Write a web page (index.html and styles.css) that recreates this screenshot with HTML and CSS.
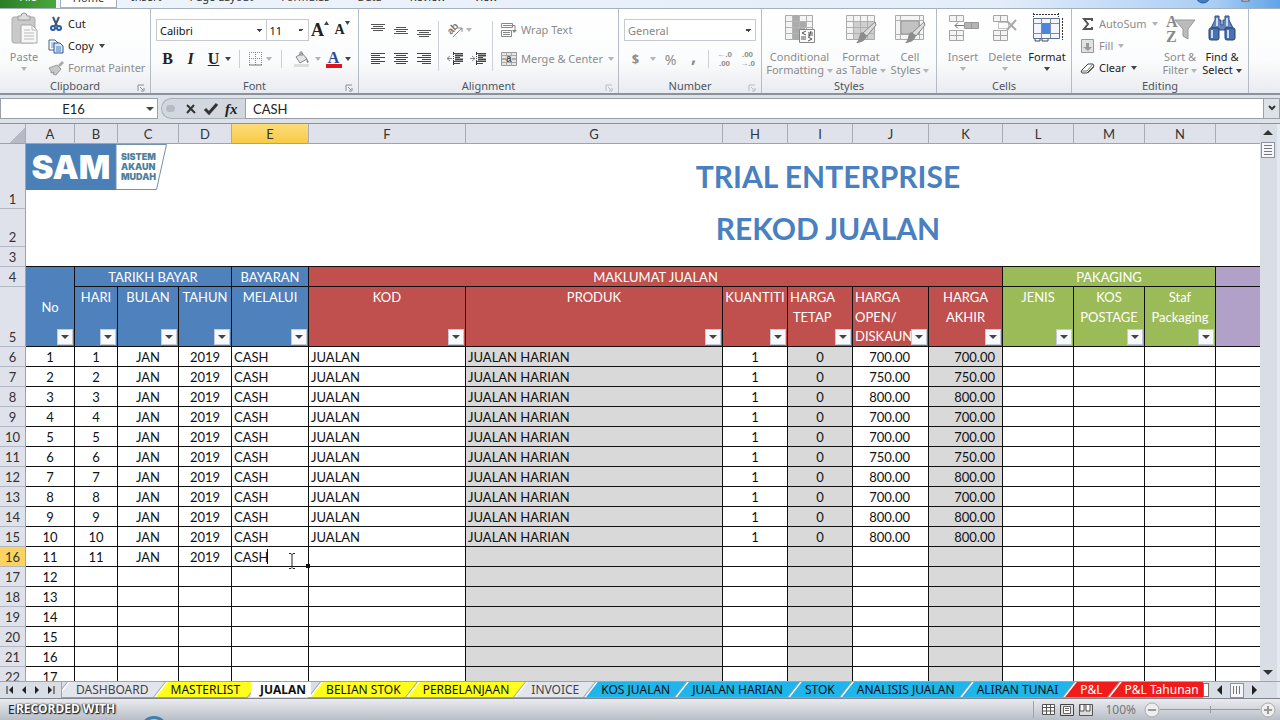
FILE: index.html
```html
<!DOCTYPE html>
<html lang="ms">
<head>
<meta charset="utf-8">
<title>Rekod Jualan</title>
<link rel="stylesheet" href="styles.css">
</head>
<body>
<nav class="ribbon-tabs">
  <button class="rtab file">File</button>
  <button class="rtab home">Home</button>
  <button class="rtab">Insert</button>
  <button class="rtab">Page Layout</button>
  <button class="rtab">Formulas</button>
  <button class="rtab">Data</button>
  <button class="rtab">Review</button>
  <button class="rtab">View</button>
  <span class="window-icons">
    <svg width="70" height="9" viewBox="0 0 70 9"><circle cx="9" cy="-3" r="7" fill="#3d7fc4" stroke="#2c5f9a"/><path d="M7 0h4" stroke="#fff" stroke-width="2"/><rect x="48" y="-6" width="7" height="8" fill="#fff" stroke="#555"/></svg>
  </span>
</nav>

<header class="ribbon">
  <section class="group g-clip">
    <div class="group-body clip-body">
      <button class="big paste off">
        <svg width="30" height="32" viewBox="0 0 30 32"><rect x="3" y="4" width="23" height="26" rx="2" fill="#c9c9c9" stroke="#adadad"/><path d="M9 7V3h3a3 3 0 0 1 6 0h3v4z" fill="#ddd" stroke="#999"/><path d="M12 12h11l5 5v13H12z" fill="#f7f7f7" stroke="#aaa"/><path d="M23 12v5h5M15 17h6M15 20h10M15 23h10M15 26h10" fill="none" stroke="#bbb"/></svg>
        <span>Paste</span><i class="arr"></i>
      </button>
      <div class="stack">
        <button class="line"><svg width="16" height="16" viewBox="0 0 16 16"><path d="M5 1l4 9M11 1L7 10" stroke="#44556e" stroke-width="2"/><circle cx="5" cy="12" r="2" fill="none" stroke="#2a5caa" stroke-width="2"/><circle cx="11" cy="12" r="2" fill="none" stroke="#2a5caa" stroke-width="2"/></svg>Cut</button>
        <button class="line"><svg width="16" height="16" viewBox="0 0 16 16"><path d="M1 2h6l3 3v7H1z" fill="#fff" stroke="#3c639c"/><path d="M3 5h4M3 7h3M3 9h3" stroke="#6d94cc"/><path d="M6 5h6l3 3v7H6z" fill="#dce8f8" stroke="#2e5796"/><path d="M8 9h5M8 11h5M8 13h5" stroke="#4e7dc0"/></svg>Copy<i class="arr"></i></button>
        <button class="line off"><svg width="16" height="16" viewBox="0 0 16 16"><path d="M10 5l4-4 2 2-4 4z" fill="#aaa"/><path d="M1 8l8-3 4 4-5 6-3-1 1-2-3 1 0-2z" fill="#c8c8c8" stroke="#999"/></svg>Format Painter</button>
      </div>
    </div>
    <h2>Clipboard</h2><svg class="launch" width="8" height="8" viewBox="0 0 8 8"><path d="M1 7V1h6M3 3l3 3M7 4v3H4" fill="none" stroke="#8a8f98"/></svg>
  </section>

  <section class="group g-font">
    <div class="group-body font-body">
      <div class="row">
        <select class="combo face" aria-label="Font"><option>Calibri</option></select>
        <select class="combo size" aria-label="Font size"><option>11</option></select>
        <button class="ic w24 serif grow" aria-label="Grow font">A<svg width="5" height="4" viewBox="0 0 5 4"><path d="M0 4L2.500 0L5 4z" fill="#345"/></svg></button>
        <button class="ic w24 serif shrink" aria-label="Shrink font">A<svg width="5" height="4" viewBox="0 0 5 4"><path d="M0 0h5L2.500 4z" fill="#345"/></svg></button>
      </div>
      <div class="row font-row">
        <button class="ic w23 serif">B</button>
        <button class="ic w23 serif"><em>I</em></button>
        <button class="ic w23 serif"><u>U</u></button>
        <i class="arr"></i><span class="vsep"></span>
        <button class="ic w16" aria-label="Borders"><svg width="14" height="14" viewBox="0 0 14 14"><path d="M.5 0v13M6.500 0v13M12.500 0v13M0 .5h13M0 6.500h13" stroke="#888" stroke-dasharray="1 1"/><path d="M0 13h13" stroke="#777"/></svg></button>
        <i class="arr dim"></i><span class="vsep"></span>
        <button class="ic w23" aria-label="Fill color"><svg width="17" height="16" viewBox="0 0 17 16"><path d="M3 6l6-4 5 6-7 4z" fill="#e4e4e4" stroke="#888"/><path d="M7 5V1h2v4" fill="none" stroke="#888"/><path d="M13 6l3 5-2 1z" fill="#888"/><path d="M1 13h15v3H1z" fill="#ddd"/></svg></button>
        <i class="arr dim"></i>
        <button class="ic w23 fontcolor serif">A</button>
        <i class="arr"></i>
      </div>
    </div>
    <h2>Font</h2><svg class="launch" width="8" height="8" viewBox="0 0 8 8"><path d="M1 7V1h6M3 3l3 3M7 4v3H4" fill="none" stroke="#8a8f98"/></svg>
  </section>

  <section class="group g-align">
    <div class="group-body align-body">
      <div class="grid3">
        <button class="ic" aria-label="Top align"><svg width="14" height="14" viewBox="0 0 14 14"><path d="M0 1.500h14M2 3.500h10M0 5.500h14M2 7.500h10" stroke="#555"/></svg></button>
        <button class="ic" aria-label="Middle align"><svg width="14" height="14" viewBox="0 0 14 14"><path d="M2 4.500h10M0 6.500h14M2 8.500h10M0 10.500h14" stroke="#555"/></svg></button>
        <button class="ic" aria-label="Bottom align"><svg width="14" height="14" viewBox="0 0 14 14"><path d="M0 7.500h14M2 9.500h10M0 11.500h14M2 13.500h10" stroke="#555"/></svg></button>
        <button class="ic" aria-label="Align left"><svg width="14" height="14" viewBox="0 0 14 14"><path d="M0 1.500h14M0 3.500h9M0 5.500h14M0 7.500h9M0 9.500h14M0 11.500h9" stroke="#444"/></svg></button>
        <button class="ic" aria-label="Center"><svg width="14" height="14" viewBox="0 0 14 14"><path d="M0 1.500h14M2 3.500h10M0 5.500h14M2 7.500h10M0 9.500h14M2 11.500h10" stroke="#444"/></svg></button>
        <button class="ic" aria-label="Align right"><svg width="14" height="14" viewBox="0 0 14 14"><path d="M0 1.500h14M5 3.500h9M0 5.500h14M5 7.500h9M0 9.500h14M5 11.500h9" stroke="#444"/></svg></button>
      </div>
      <span class="vsep tall"></span>
      <div class="stack2">
        <div class="row"><button class="ic w23" aria-label="Orientation"><svg width="16" height="16" viewBox="0 0 16 16"><text x="1" y="10" class="abtext" transform="rotate(-45 6 8)">ab</text><path d="M6 15L15 6M11 6h4v4" fill="none" stroke="#888"/></svg></button><i class="arr dim"></i></div>
        <div class="row"><button class="ic w23" aria-label="Decrease indent"><svg width="16" height="14" viewBox="0 0 16 14"><path d="M6 1.500h10M8 5.500h5M6 9.500h10M6 11.500h7" stroke="#444"/><path d="M8 3.500h8M8 7.500h8" stroke="#444" stroke-width="2"/><path d="M6.500 0v14" stroke="#333" stroke-dasharray="1 1"/><path d="M0 6.500h5M3 4L0 6.500L3 9" fill="none" stroke="#888"/></svg></button><button class="ic w23" aria-label="Increase indent"><svg width="16" height="14" viewBox="0 0 16 14"><path d="M6 1.500h10M8 5.500h5M6 9.500h10M6 11.500h7" stroke="#444"/><path d="M8 3.500h8M8 7.500h8" stroke="#444" stroke-width="2"/><path d="M6.500 0v14" stroke="#333" stroke-dasharray="1 1"/><path d="M0 6.500h5M2 4L5 6.500L2 9" fill="none" stroke="#888"/></svg></button></div>
      </div>
      <span class="vsep tall"></span>
      <div class="stack2">
        <button class="line off"><svg width="16" height="16" viewBox="0 0 16 16"><path d="M.5 1.500h11v4H.5zM.5 8.500h10v6H.5zM2 3.500h12v6M2 10.500h7M2 12.500h7" fill="none" stroke="#888"/><path d="M11 8h5l-3 3z" fill="#888"/></svg>Wrap Text</button>
        <button class="line off"><svg width="16" height="16" viewBox="0 0 16 16"><path d="M.5 1.500h15v13H.5z" fill="#e6e6e6" stroke="#999"/><path d="M0 4.500h15M0 11.500h15M5.500 1v3M10.500 1v3M5.500 12v3M10.500 12v3" stroke="#aaa"/><path d="M1 8h4M11 8h4" stroke="#777"/><text x="5" y="11" class="atext">a</text></svg>Merge &amp; Center<i class="arr"></i></button>
      </div>
    </div>
    <h2>Alignment</h2><svg class="launch" width="8" height="8" viewBox="0 0 8 8"><path d="M1 7V1h6M3 3l3 3M7 4v3H4" fill="none" stroke="#b9bdc4"/></svg>
  </section>

  <section class="group g-number">
    <div class="group-body font-body">
      <div class="row"><select class="combo general" aria-label="Number format"><option>General</option></select></div>
      <div class="row num-row">
        <button class="ic w23 off money">$</button><i class="arr dim"></i>
        <button class="ic w23 off pct">%</button>
        <button class="ic w23 off comma">,</button><span class="vsep"></span>
        <button class="ic w23 off dec">←.0<br>.00</button>
        <button class="ic w23 off dec">.00<br>→.0</button>
      </div>
    </div>
    <h2>Number</h2><svg class="launch" width="8" height="8" viewBox="0 0 8 8"><path d="M1 7V1h6M3 3l3 3M7 4v3H4" fill="none" stroke="#b9bdc4"/></svg>
  </section>

  <section class="group g-styles">
    <div class="group-body">
      <button class="big b65 off"><svg width="32" height="32" viewBox="0 0 32 32"><path d="M1.500 2.500h27v24h-27z" fill="#f4f4f4" stroke="#aaa"/><path d="M9 3h7v23H9zM16 9h7v6h-7zM16 15h5v6h-5z" fill="#ababab"/><path d="M1 8.500h27M1 14.500h27M1 20.500h27M8.500 2v25M15.500 2v25M22.500 2v25" stroke="#b4b4b4"/><path d="M15.500 16.500h15v13h-15z" fill="#fafafa" stroke="#888"/><path d="M22 18l-4 2 4 2M17 24h5M17 26h5M24 20h5M24 22h5M27 18l-2 6M24 24l4 2-4 2" fill="none" stroke="#555"/></svg><span>Conditional<br>Formatting <i class="arr"></i></span></button>
      <button class="big b57 off"><svg width="32" height="32" viewBox="0 0 32 32"><path d="M1.500 2.500h28v24h-28z" fill="#f4f4f4" stroke="#aaa"/><path d="M9 9h20v17H9z" fill="#cfcfcf"/><path d="M1 8.500h28M1 14.500h28M1 20.500h28M8.500 2v25M15.500 2v25M22.500 2v25" stroke="#b0b0b0"/><path d="M30 9l1 3-9 11-4-3z" fill="#ddd" stroke="#888"/><path d="M17 19l5 4c-2 5-6 7-11 7 4-3 2-8 6-11z" fill="#8c8c8c"/></svg><span>Format<br>as Table <i class="arr"></i></span></button>
      <button class="big b40 off"><svg width="32" height="32" viewBox="0 0 32 32"><path d="M1.500 2.500h28v24h-28z" fill="#f4f4f4" stroke="#aaa"/><path d="M1 7.500h28M1 21.500h28M6.500 2v25M25.500 2v25" stroke="#b0b0b0"/><path d="M7 8h18v13H7z" fill="#c2c2c2" stroke="#999"/><path d="M30 9l1 3-9 11-4-3z" fill="#ddd" stroke="#888"/><path d="M17 19l5 4c-2 5-6 7-11 7 4-3 2-8 6-11z" fill="#8c8c8c"/></svg><span>Cell<br>Styles <i class="arr"></i></span></button>
    </div>
    <h2>Styles</h2>
  </section>

  <section class="group g-cells">
    <div class="group-body">
      <button class="big b42 off"><svg width="32" height="32" viewBox="0 0 32 32"><path d="M2.500 2.500h14v6h-14zM9.500 2v6M2.500 17.500h14v10h-14zM9.500 17v10M2 22.500h14" fill="#f4f4f4" stroke="#a5a5a5"/><path d="M17.500 9.500h14v6h-14z" fill="#b4b4b4" stroke="#999"/><path d="M24.500 9v6" stroke="#999"/><path d="M8 12.500h9M11 9.500l-3 3 3 3" fill="none" stroke="#777"/></svg><span>Insert</span><i class="arr"></i></button>
      <button class="big b42 off"><svg width="32" height="32" viewBox="0 0 32 32"><path d="M4.500 2.500h14v6h-14zM11.500 2v6M4.500 17.500h14v10h-14zM11.500 17v10M4 22.500h14" fill="#f4f4f4" stroke="#a5a5a5"/><path d="M9.500 9.500h10v6h-10z" fill="none" stroke="#888" stroke-dasharray="1 1"/><path d="M18 8l9 9M27 7l-9 10" stroke="#aaa" stroke-width="2"/></svg><span>Delete</span><i class="arr"></i></button>
      <button class="big b42"><svg width="32" height="32" viewBox="0 0 32 32"><path d="M2 1.500h26" stroke="#333" stroke-dasharray="2 1"/><path d="M2.500 0v4M27.500 0v4M31.500 5v22" stroke="#333" stroke-dasharray="2 1"/><path d="M2.500 5.500h26v20h-26z" fill="#f2f5fb" stroke="#5d6f90"/><path d="M2 10.500h26M2 20.500h26M10.500 5v20M19.500 5v20" stroke="#7b8cab"/><path d="M11 10h8v11h-8z" fill="#4e86de"/><path d="M4 26v2h5v-2M11 26v2h6v-2" fill="#fff" stroke="#445"/></svg><span>Format</span><i class="arr"></i></button>
    </div>
    <h2>Cells</h2>
  </section>

  <section class="group g-edit">
    <div class="group-body edit-body">
      <div class="stack">
        <button class="line off"><svg width="16" height="16" viewBox="0 0 16 16"><path d="M13 5V3H5l4 5-4 5h8v-2" fill="none" stroke="#555" stroke-width="2"/></svg>AutoSum<i class="arr"></i></button>
        <button class="line off"><svg width="16" height="16" viewBox="0 0 16 16"><path d="M2.500 1.500h12v13h-12z" fill="#e2e2e2" stroke="#999"/><path d="M7 5h3v4h3l-4 4-5-4h3z" fill="#999"/></svg>Fill<i class="arr"></i></button>
        <button class="line"><svg width="16" height="16" viewBox="0 0 16 16"><path d="M2 11l7-7h5l1 2-7 7H3z" fill="#fff" stroke="#444"/><path d="M9 13l6-6M2 11l6 0 6-7" fill="none" stroke="#777"/></svg>Clear<i class="arr"></i></button>
      </div>
      <button class="big b42 off"><svg width="32" height="32" viewBox="0 0 32 32"><path d="M11 7h20l-7 9v10l-5-3v-7z" fill="#bbb" stroke="#999"/><text x="2" y="14" class="aztext">A</text><text x="2" y="29" class="aztext">Z</text></svg><span>Sort &amp;<br>Filter <i class="arr"></i></span></button>
      <button class="big b42"><svg width="32" height="32" viewBox="0 0 32 32"><path d="M9 3h4v4h2v5h2V7h2V3h4v4l4 8h-8v2h-6v-2H5l4-8z" fill="#6486bd" stroke="#2f4d82"/><rect x="3" y="15" width="10" height="12" rx="2" fill="#4a70b0" stroke="#26426f"/><rect x="19" y="15" width="10" height="12" rx="2" fill="#4a70b0" stroke="#26426f"/><path d="M6 17v8M22 17v8M11 5v8M21 5v8" stroke="#c9daf3" stroke-width="2"/></svg><span>Find &amp;<br>Select <i class="arr"></i></span></button>
    </div>
    <h2>Editing</h2>
  </section>
</header>

<div class="formula-bar">
  <div class="name-box"><input aria-label="Name box" value="E16"><i class="arr"></i></div>
  <div class="fx">
    <i class="dot"></i>
    <button aria-label="Cancel"><svg width="12" height="12" viewBox="0 0 12 12"><path d="M2 2l8 8M9 2l-7 8" stroke="#333" stroke-width="2"/></svg></button>
    <button aria-label="Enter"><svg width="14" height="12" viewBox="0 0 14 12"><path d="M1 6l4 4 8-9" fill="none" stroke="#333" stroke-width="3"/></svg></button>
    <button class="fxb"><em>fx</em></button>
  </div>
  <input class="formula" aria-label="Formula" value="CASH">
  <button class="expand" aria-label="Expand formula bar"><svg width="8" height="7" viewBox="0 0 8 7"><path d="M1 1l3 3 3-3" fill="none" stroke="#333" stroke-width="2"/></svg></button>
</div>

<main class="workspace">
  <div class="sheet">
    <table>
      <colgroup><col class="c0"><col class="cA"><col class="cB"><col class="cC"><col class="cD"><col class="cE"><col class="cF"><col class="cG"><col class="cH"><col class="cH"><col class="cJ"><col class="cK"><col class="cL"><col class="cL"><col class="cL"><col class="cO"></colgroup>
      <thead>
        <tr class="letters"><th class="corner"></th><th>A</th><th>B</th><th>C</th><th>D</th><th class="cur">E</th><th>F</th><th>G</th><th>H</th><th>I</th><th>J</th><th>K</th><th>L</th><th>M</th><th>N</th><th></th></tr>
      </thead>
      <tbody>
        <tr class="r1"><th>1</th><td class="title" colspan="15">
          <div class="logo"><strong>SAM</strong><svg width="51" height="46" viewBox="0 0 51 46"><path d="M0 .5h50.500L40.500 45.500H0z" fill="#fff" stroke="#6f93a8"/></svg><span>SISTEM<br>AKAUN<br>MUDAH</span></div>
          TRIAL ENTERPRISE</td></tr>
        <tr class="r2"><th>2</th><td class="title" colspan="15">REKOD JUALAN</td></tr>
        <tr class="r3"><th>3</th><td class="rule" colspan="15"></td></tr>
        <tr class="h4"><th>4</th><td class="blue no" rowspan="2">No<button class="flt" aria-label="Filter"></button></td><td class="blue" colspan="3">TARIKH BAYAR</td><td class="blue">BAYARAN</td><td class="red" colspan="6">MAKLUMAT JUALAN</td><td class="green" colspan="3">PAKAGING</td><td class="purple"></td></tr>
        <tr class="h5"><th>5</th><td class="blue">HARI<button class="flt" aria-label="Filter"></button></td><td class="blue">BULAN<button class="flt" aria-label="Filter"></button></td><td class="blue">TAHUN<button class="flt" aria-label="Filter"></button></td><td class="blue">MELALUI<button class="flt" aria-label="Filter"></button></td><td class="red">KOD<button class="flt" aria-label="Filter"></button></td><td class="red">PRODUK<button class="flt" aria-label="Filter"></button></td><td class="red">KUANTITI<button class="flt" aria-label="Filter"></button></td><td class="red lft">HARGA<br>&nbsp;TETAP<button class="flt" aria-label="Filter"></button></td><td class="red lft">HARGA<br>OPEN/<div class="last">DISKAUN</div><button class="flt" aria-label="Filter"></button></td><td class="red">HARGA<br>AKHIR<button class="flt" aria-label="Filter"></button></td><td class="green">JENIS<button class="flt" aria-label="Filter"></button></td><td class="green">KOS<br>POSTAGE<button class="flt" aria-label="Filter"></button></td><td class="green">Staf<br>Packaging<button class="flt" aria-label="Filter"></button></td><td class="purple"></td></tr>
        <tr><th>6</th><td>1</td><td>1</td><td>JAN</td><td>2019</td><td>CASH</td><td>JUALAN</td><td>JUALAN HARIAN</td><td>1</td><td>0</td><td>700.00</td><td>700.00</td><td></td><td></td><td></td><td></td></tr>
        <tr><th>7</th><td>2</td><td>2</td><td>JAN</td><td>2019</td><td>CASH</td><td>JUALAN</td><td>JUALAN HARIAN</td><td>1</td><td>0</td><td>750.00</td><td>750.00</td><td></td><td></td><td></td><td></td></tr>
        <tr><th>8</th><td>3</td><td>3</td><td>JAN</td><td>2019</td><td>CASH</td><td>JUALAN</td><td>JUALAN HARIAN</td><td>1</td><td>0</td><td>800.00</td><td>800.00</td><td></td><td></td><td></td><td></td></tr>
        <tr><th>9</th><td>4</td><td>4</td><td>JAN</td><td>2019</td><td>CASH</td><td>JUALAN</td><td>JUALAN HARIAN</td><td>1</td><td>0</td><td>700.00</td><td>700.00</td><td></td><td></td><td></td><td></td></tr>
        <tr><th>10</th><td>5</td><td>5</td><td>JAN</td><td>2019</td><td>CASH</td><td>JUALAN</td><td>JUALAN HARIAN</td><td>1</td><td>0</td><td>700.00</td><td>700.00</td><td></td><td></td><td></td><td></td></tr>
        <tr><th>11</th><td>6</td><td>6</td><td>JAN</td><td>2019</td><td>CASH</td><td>JUALAN</td><td>JUALAN HARIAN</td><td>1</td><td>0</td><td>750.00</td><td>750.00</td><td></td><td></td><td></td><td></td></tr>
        <tr><th>12</th><td>7</td><td>7</td><td>JAN</td><td>2019</td><td>CASH</td><td>JUALAN</td><td>JUALAN HARIAN</td><td>1</td><td>0</td><td>800.00</td><td>800.00</td><td></td><td></td><td></td><td></td></tr>
        <tr><th>13</th><td>8</td><td>8</td><td>JAN</td><td>2019</td><td>CASH</td><td>JUALAN</td><td>JUALAN HARIAN</td><td>1</td><td>0</td><td>700.00</td><td>700.00</td><td></td><td></td><td></td><td></td></tr>
        <tr><th>14</th><td>9</td><td>9</td><td>JAN</td><td>2019</td><td>CASH</td><td>JUALAN</td><td>JUALAN HARIAN</td><td>1</td><td>0</td><td>800.00</td><td>800.00</td><td></td><td></td><td></td><td></td></tr>
        <tr><th>15</th><td>10</td><td>10</td><td>JAN</td><td>2019</td><td>CASH</td><td>JUALAN</td><td>JUALAN HARIAN</td><td>1</td><td>0</td><td>800.00</td><td>800.00</td><td></td><td></td><td></td><td></td></tr>
        <tr><th class="cur">16</th><td>11</td><td>11</td><td>JAN</td><td>2019</td><td class="editing"><input aria-label="E16" value="CASH"><i class="caret"></i><svg class="ibeam" width="8" height="16" viewBox="0 0 8 16"><path d="M1 .5h2l1 1 1-1h2M4 1v13M1 15.500h2l1-1 1 1h2" fill="none" stroke="#222"/></svg><i class="handle"></i></td><td></td><td></td><td></td><td></td><td></td><td></td><td></td><td></td><td></td><td></td></tr>
        <tr><th>17</th><td>12</td><td></td><td></td><td></td><td></td><td></td><td></td><td></td><td></td><td></td><td></td><td></td><td></td><td></td><td></td></tr>
        <tr><th>18</th><td>13</td><td></td><td></td><td></td><td></td><td></td><td></td><td></td><td></td><td></td><td></td><td></td><td></td><td></td><td></td></tr>
        <tr><th>19</th><td>14</td><td></td><td></td><td></td><td></td><td></td><td></td><td></td><td></td><td></td><td></td><td></td><td></td><td></td><td></td></tr>
        <tr><th>20</th><td>15</td><td></td><td></td><td></td><td></td><td></td><td></td><td></td><td></td><td></td><td></td><td></td><td></td><td></td><td></td></tr>
        <tr><th>21</th><td>16</td><td></td><td></td><td></td><td></td><td></td><td></td><td></td><td></td><td></td><td></td><td></td><td></td><td></td><td></td></tr>
        <tr><th>22</th><td>17</td><td></td><td></td><td></td><td></td><td></td><td></td><td></td><td></td><td></td><td></td><td></td><td></td><td></td><td></td></tr>
      </tbody>
    </table>
  </div>
  <div class="vscroll"><i class="up"></i><i class="thumb"></i><i class="down"></i></div>
</main>

<div class="tabbar">
  <div class="tabnav">
    <button aria-label="First sheet"><svg width="8" height="8" viewBox="0 0 8 8"><path d="M1 0v8" stroke="#222"/><path d="M7 0v8L3 4z" fill="#222"/></svg></button>
    <button aria-label="Previous sheet"><svg width="8" height="8" viewBox="0 0 8 8"><path d="M6 0v8L2 4z" fill="#222"/></svg></button>
    <button aria-label="Next sheet"><svg width="8" height="8" viewBox="0 0 8 8"><path d="M2 0v8l4-4z" fill="#222"/></svg></button>
    <button aria-label="Last sheet"><svg width="8" height="8" viewBox="0 0 8 8"><path d="M1 0v8l4-4z" fill="#222"/><path d="M7 0v8" stroke="#222"/></svg></button>
  </div>
  <div class="tabs">
    <button class="tab plain first"><span>DASHBOARD</span></button>
    <button class="tab yellow"><span>MASTERLIST</span></button>
    <button class="tab active"><span>JUALAN</span></button>
    <button class="tab yellow"><span>BELIAN STOK</span></button>
    <button class="tab yellow"><span>PERBELANJAAN</span></button>
    <button class="tab plain"><span>INVOICE</span></button>
    <button class="tab cyan"><span>KOS JUALAN</span></button>
    <button class="tab cyan"><span>JUALAN HARIAN</span></button>
    <button class="tab cyan"><span>STOK</span></button>
    <button class="tab cyan"><span>ANALISIS JUALAN</span></button>
    <button class="tab cyan"><span>ALIRAN TUNAI</span></button>
    <button class="tab crimson"><span>P&amp;L</span></button>
    <button class="tab crimson"><span>P&amp;L Tahunan</span></button>
  </div>
  <div class="hscroll"><i class="grip"></i><i class="left"></i><i class="hthumb"></i><i class="right"></i></div>
</div>

<footer class="status">
  <span class="mode">Enter</span>
  <div class="views">
    <button aria-label="Normal"><svg width="13" height="11" viewBox="0 0 13 11"><path d="M.5 .5h12v10H.5zM.5 3.500h12M.5 7h12M4.500 0v11M8.500 0v11" fill="#fff" stroke="#555"/></svg></button>
    <button aria-label="Page layout"><svg width="14" height="12" viewBox="0 0 14 12"><path d="M.5 .5h13v11H.5z" fill="#ddd" stroke="#444"/><path d="M3.500 2.500h7v7h-7zM5 4.500h4M5 6.500h4" fill="#fff" stroke="#666"/></svg></button>
    <button aria-label="Page break"><svg width="14" height="12" viewBox="0 0 14 12"><path d="M.5 .5h13v11H.5z" fill="#ddd" stroke="#555"/><path d="M1 1v6h4V1M7 1v6h4V1" fill="#fff" stroke="#555"/></svg></button>
    <span class="pct100">100%</span>
    <div class="zoomer">
      <button aria-label="Zoom out"><svg width="16" height="16" viewBox="0 0 16 16"><circle cx="8" cy="8" r="7" fill="#eee" stroke="#aaa"/><path d="M4 8h8" stroke="#999" stroke-width="2"/></svg></button>
      <span class="track"></span>
      <button aria-label="Zoom in"><svg width="16" height="16" viewBox="0 0 16 16"><circle cx="8" cy="8" r="7" fill="#eee" stroke="#aaa"/><path d="M4 8h8M8 4v8" stroke="#999" stroke-width="2"/></svg></button>
    </div>
  </div>
</footer>
<div class="recorded">RECORDED WITH</div>
<i class="ring"></i>
</body>
</html>
```
FILE: styles.css
```css
* { box-sizing: border-box; }
html, body { height: 100%; }
body { margin: 0; display: flex; flex-direction: column; height: 100vh; overflow: hidden; position: relative; background: #e4e8ee; font-family: "Noto Sans", sans-serif; font-size: 11px; color: #222; }
button { border: 0; background: none; padding: 0; margin: 0; font: inherit; color: inherit; }
input { border: 0; padding: 0; margin: 0; background: none; font: inherit; color: inherit; outline: 0; min-width: 0; }
svg { display: block; flex: none; overflow: visible; }

.arr { display: inline-block; flex: none; width: 0; height: 0; border: 3px solid transparent; border-top: 4px solid #444; border-bottom: 0; vertical-align: middle; }
.off .arr, .arr.dim { border-top-color: #b4b4b4; }
.off { color: #8c8c8c; }

.ribbon-tabs { flex: none; display: flex; align-items: flex-end; height: 9px; overflow: hidden; background: linear-gradient(90deg, #eef4fc 0, #e4edfa 78%, #a9cdf5 95%, #5fa4e8 100%); border-bottom: 1px solid #a6b0bd; line-height: 16px; }
.rtab { height: 19px; flex: none; padding: 0 14px 3px; color: #333; }
.rtab.file { width: 56px; background: linear-gradient(90deg, #2c7d24, #4aa83c); color: #fff; }
.rtab.home { width: 57px; padding: 0 0 3px; margin: 0 0 0 4px; background: #fff; border: 1px solid #a6b0bd; }
.window-icons { margin-left: auto; padding-right: 16px; height: 9px; }

.ribbon { flex: none; display: flex; height: 86px; background: linear-gradient(#fff 0, #fbfcfd 60%, #e8ebf0 100%); border-bottom: 2px solid #8d9299; }
.group { position: relative; display: flex; flex: none; flex-direction: column; justify-content: space-between; border-right: 1px solid #b6bcc5; padding: 4px 5px 0; }
.g-clip { width: 151px; } .g-font { width: 208px; } .g-align { width: 260px; } .g-number { width: 143px; } .g-styles { width: 175px; } .g-cells { width: 135px; } .g-edit { width: 177px; }
.group h2 { margin: 0; font-size: 11px; font-weight: 400; line-height: 14px; text-align: center; color: #4f5660; }
.group-body { display: flex; height: 66px; }
.launch { position: absolute; right: 5px; bottom: 1px; }
.big { display: flex; flex: none; flex-direction: column; align-items: center; line-height: 13px; text-align: center; white-space: nowrap; }
.big > .arr { margin-top: 4px; }
.big svg { margin-bottom: 5px; }
.paste { width: 38px; }
.b65 { width: 65px; } .b57 { width: 58px; } .b40 { width: 40px; } .b42 { width: 42px; }
.clip-body { gap: 5px; }
.stack { display: flex; flex-direction: column; }
.edit-body .stack { flex: none; width: 82px; padding-left: 2px; }
.line { display: flex; flex: none; align-items: center; gap: 4px; height: 22px; white-space: nowrap; line-height: 16px; }
.line .arr { margin-left: 1px; }
.row { display: flex; align-items: center; height: 24px; }
.font-body { flex-direction: column; gap: 5px; padding-top: 5px; }
.combo { appearance: none; height: 22px; border: 1px solid #c6cad0; border-radius: 0; padding: 0 3px; font: inherit; color: #111; background: linear-gradient(45deg, transparent 50%, #444 50%) right 7px center / 3px 3px no-repeat, linear-gradient(-45deg, transparent 50%, #444 50%) right 4px center / 3px 3px no-repeat, #fff; background: linear-gradient(to bottom left, #444 50%, transparent 50%) right 7px center / 3px 3px no-repeat, linear-gradient(to bottom right, #444 50%, transparent 50%) right 4px center / 3px 3px no-repeat, #fff; }
.face { width: 112px; } .size { width: 43px; border-left: 0; } .general { width: 133px; color: #888; }
.ic { display: flex; align-items: center; justify-content: center; height: 22px; flex: none; }
.w16 { width: 16px; } .w23 { width: 23px; } .w24 { width: 22px; }
.serif { font-family: "Liberation Serif", serif; font-weight: 700; font-size: 16px; }
.grow { font-size: 18px; } .shrink { font-size: 14px; }
.grow svg, .shrink svg { align-self: flex-start; margin-top: 2px; }
.vsep { width: 1px; height: 18px; background: #cdd1d7; margin: 0 7px; flex: none; }
.vsep.tall { height: 50px; margin: 8px 4px 0 3px; }
.font-row .vsep { margin: 0 8px; }
.font-row .dim { margin: 0 1px 0 2px; }
.num-row .dim { margin: 0 3px; }
.num-row .vsep { margin: 0 4px 0 3px; }
.fontcolor { color: #2a4a9a; flex-direction: column; line-height: 13px; }
.fontcolor::after { content: ""; width: 16px; height: 4px; background: #e01515; }
.align-body { padding-left: 2px; }
.grid3 { display: grid; grid-template-columns: 23px 23px 23px; grid-template-rows: 24px 24px; gap: 5px 0; padding-top: 5px; align-items: center; }
.stack2 { display: flex; flex-direction: column; gap: 5px; padding-top: 5px; }
.stack2 .line { height: 24px; }
.stack2 + .vsep + .stack2 { padding-left: 4px; }
.abtext { font: bold 10px "Liberation Sans", sans-serif; fill: #777; }
.atext { font: bold 10px "Liberation Sans", sans-serif; fill: #555; }
.aztext { font: bold 16px "Liberation Serif", serif; fill: #888; }
.money, .comma { font-weight: 700; font-size: 13px; } .comma { font-size: 18px; line-height: 10px; padding-bottom: 6px; } .pct { font-size: 14px; }
.dec { display: block; font-family: "Liberation Sans", sans-serif; font-size: 8px; font-weight: 700; line-height: 9px; text-align: center; height: 18px; }

.formula-bar { flex: none; display: flex; height: 29px; padding: 3px 0 4px; background: #dde2e9; line-height: 20px; font-family: Lato, sans-serif; font-size: 13px; border-bottom: 1px solid #8d9299; }
.name-box { display: flex; align-items: center; width: 158px; background: #fff; border: 1px solid #9aa0a8; }
.name-box input { flex: 1; text-align: center; }
.name-box .arr { margin-right: 3px; border-width: 4px; border-bottom: 0; }
.fx { display: flex; align-items: center; gap: 7px; width: 84px; margin-left: 3px; padding-left: 4px; background: #d3d8e0; border: 1px solid #a9afb8; border-right: 0; border-radius: 11px 0 0 11px; }
.dot { width: 9px; height: 7px; border-radius: 4px; background: #b7bcc4; margin-right: 3px; }
.fxb { font-family: "Liberation Serif", serif; font-weight: 700; font-size: 15px; }
.formula { flex: 1; background: #fff; border: 1px solid #9aa0a8; padding-left: 7px; }
.expand { width: 16px; display: flex; align-items: center; justify-content: center; border: 1px solid #9aa0a8; border-left: 0; }

.workspace { flex: 1; min-height: 0; display: flex; }
.sheet { flex: 1; min-width: 0; overflow: hidden; background: #fff; }
table { border-collapse: separate; border-spacing: 0; table-layout: fixed; width: 1630px; font-family: Lato, sans-serif; font-size: 13px; line-height: 18px; color: #111; }
.c0 { width: 26px; } .cA { width: 49px; } .cB { width: 43px; } .cC { width: 61px; } .cD { width: 53px; } .cE { width: 77px; } .cF { width: 157px; } .cG { width: 257px; } .cH { width: 65px; } .cJ { width: 76px; } .cK { width: 74px; } .cL { width: 71px; }
tr { height: 20px; }
th { padding: 0; font-weight: 400; background: #dfe2eb; color: #333; vertical-align: bottom; border-right: 1px solid #9ea4ae; border-bottom: 1px solid #b2b7c1; }
th.cur { background: #fbd360; }
.letters th.cur { background: linear-gradient(#fbdc7c, #f8cb45); }
.letters th { vertical-align: middle; border-right-color: #a7adb8; border-bottom-color: #9ea4ae; }
.letters .corner { background: linear-gradient(135deg, #dfe2eb 65%, #b5bac4 65%); }
td { position: relative; padding: 0; height: 20px; text-align: center; border-right: 1px solid #111; border-bottom: 1px solid #111; white-space: nowrap; }
td:nth-child(6), td:nth-child(7), td:nth-child(8) { text-align: left; padding-left: 2px; }
td:nth-child(8), td:nth-child(10), td:nth-child(12) { background: #d9d9d9; }
td:nth-child(11) { text-align: right; padding-right: 18px; }
td:nth-child(12) { text-align: right; padding-right: 7px; }
.r1 { height: 65px; } .r2 { height: 38px; } .r1 td, .r2 td { height: auto; border: 0; }
.r3 .rule { border-right: 0; }
td.title { font-size: 30px; font-weight: 700; line-height: 37px; color: #4a80c0; }
.h4 td, .h5 td { color: #fff; }
.h4 td.blue, .h5 td.blue, .h4 td.red, .h5 td.red, .h4 td.green, .h5 td.green { padding: 0; text-align: center; }
.h5 { height: 60px; }
.h5 td { vertical-align: top; line-height: 20px; }
.h5 td.lft { text-align: left; padding-left: 2px; }
.last { line-height: 19px; }
.h4 td.no { vertical-align: middle; }
.h4 td.blue, .h5 td.blue { background: #4f81bd; } .h4 td.red, .h5 td.red { background: #c0504d; } .h4 td.green, .h5 td.green { background: #9bbb59; } td.purple { background: #b1a0c7; }
.flt { position: absolute; right: 1px; bottom: 1px; width: 16px; height: 16px; background: #f7f9fc; border: 1px solid #c5ccd8; }
.flt::after { content: ""; position: absolute; left: 3px; top: 5px; border: 4px solid transparent; border-top-color: #444; border-bottom: 0; }
.editing input { display: block; width: 70px; height: 18px; }
.caret { position: absolute; left: 35px; top: 2px; width: 1px; height: 15px; background: #111; }
.ibeam { position: absolute; left: 56px; top: 6px; }
.handle { position: absolute; right: -2px; bottom: -2px; width: 4px; height: 4px; background: #111; }

.logo { position: absolute; left: 0; top: 0; display: flex; height: 46px; color: #fff; font-family: Inter, sans-serif; }
.logo strong { width: 90px; background: #4a7fb8; font-size: 33px; font-weight: 900; line-height: 46px; text-align: center; }
.logo span { position: absolute; left: 95px; top: 8px; font-size: 9px; font-weight: 900; line-height: 10px; text-align: left; color: #4f809c; }

.vscroll { flex: none; width: 20px; display: flex; flex-direction: column; align-items: center; background: #d9dde6; border-right: 3px solid #e4eaf2; padding: 6px 1px 4px 0; }
.up, .down { border: 5px solid transparent; }
.up { border-bottom-color: #333; border-top: 0; }
.down { border-top-color: #333; border-bottom: 0; margin-top: auto; margin-bottom: 2px; }
.thumb { margin-top: 7px; width: 14px; height: 16px; border: 1px solid #8d939e; background: repeating-linear-gradient(#777 0 1px, transparent 1px 3px) center / 8px 10px no-repeat, #f5f6f9; }

.tabbar { flex: none; display: flex; height: 18px; background: #d9dde6; border-bottom: 1px solid #80858d; border-top: 1px solid #9ea4ae; overflow: hidden; }
.tabnav { width: 62px; flex: none; display: flex; align-items: center; justify-content: space-around; padding: 0 3px; border-right: 1px solid #9ea4ae; }
.tabs { flex: 1; min-width: 0; display: flex; overflow: hidden; font-size: 12px; line-height: 16px; }
.tab { position: relative; flex: none; padding: 0 11px; color: #111; white-space: nowrap; }
.tab span { position: relative; }
.tab::before { content: ""; position: absolute; inset: 0 -1px 1px 0; transform: skewX(-38deg); background: #e2e5ec; border-left: 2px solid #fff; outline: 1px solid #9a9fa8; }
.tab.plain { color: #444; }
.tab.first { padding-left: 14px; }
.tab.yellow::before { background: #ffff1c; } .tab.cyan::before { background: #1fb4ea; } .tab.crimson::before { background: #f01c1c; }
.tab.crimson { color: #fff; }
.tab.active { font-weight: 700; padding: 0 9px; z-index: 1; }
.tab.active::before { background: #fff; transform: none; outline: 0; right: 4px; }
.hscroll { flex: none; width: 77px; display: flex; align-items: center; gap: 8px; border-right: 3px solid #e4eaf2; }
.grip { width: 6px; height: 14px; background: #fff; border: 1px solid #777; }
.left, .right { border: 5px solid transparent; }
.left { border-right-color: #222; border-left: 0; } .right { border-left-color: #222; border-right: 0; }
.hthumb { width: 14px; height: 15px; border: 1px solid #8d939e; background: repeating-linear-gradient(90deg, #777 0 1px, transparent 1px 3px) center / 8px 8px no-repeat, #f5f6f9; }

.status { flex: none; height: 21px; display: flex; align-items: center; justify-content: space-between; padding: 0 4px 0 8px; background: linear-gradient(#e9ebef, #b9bec7); font-size: 12px; }
.mode { width: 10px; overflow: hidden; }
.views { display: flex; align-items: center; gap: 5px; padding-left: 8px; border-left: 1px solid #9ea4ae; color: #777; }
.pct100 { padding: 0 3px 0 7px; }
.zoomer { display: flex; align-items: center; }
.track { width: 100px; height: 7px; background: linear-gradient(#999, #999) center / 100% 1px no-repeat, linear-gradient(#999, #999) center / 1px 7px no-repeat; }
.recorded { position: absolute; left: 16px; bottom: 3px; font-weight: 700; font-size: 12px; line-height: 16px; color: #fff; text-shadow: 1px 1px 1px #222, -1px 0 1px #444, 1px 0 2px #222; }
.ring { position: absolute; left: 140px; bottom: -24px; width: 28px; height: 28px; border: 3px solid #3f7fae; border-radius: 50%; }
```
